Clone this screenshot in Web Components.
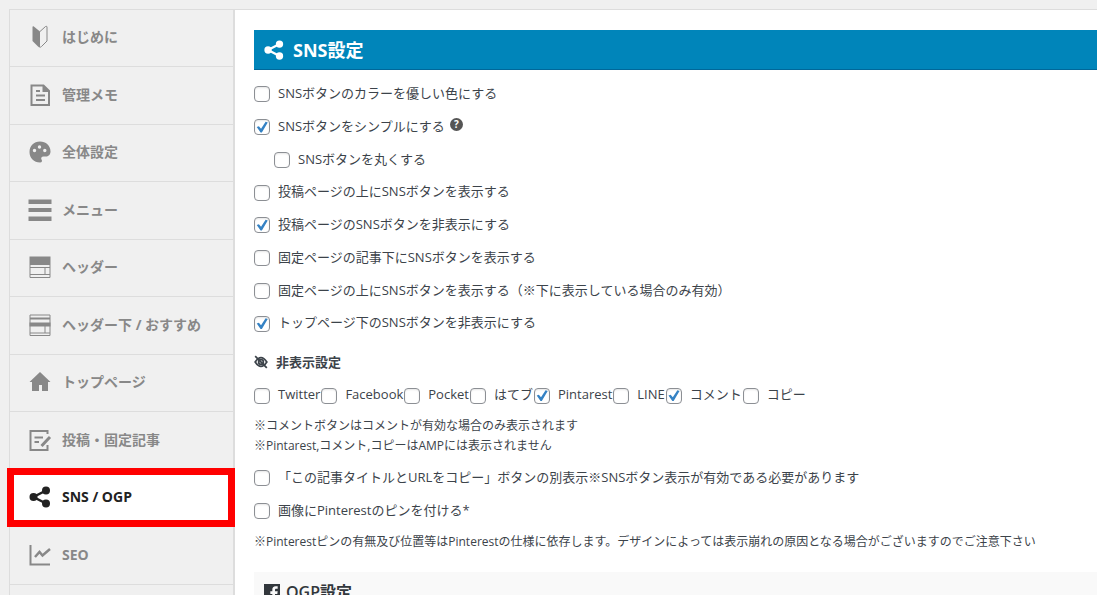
<!DOCTYPE html>
<html lang="ja">
<head>
<meta charset="utf-8">
<meta name="viewport" content="width=device-width, initial-scale=1">
<title>SNS設定</title>
<style>
  body {
    margin: 0;
    height: 100vh;
    overflow: hidden;
    background: #f0f0f0;
    color: #3c434a;
    font: 13px/20px "Open Sans", "Noto Sans CJK JP", sans-serif;
  }
</style>
</head>
<body>
<settings-page>
  <side-nav slot="nav">
    <nav-item icon="beginner">はじめに</nav-item>
    <nav-item icon="memo">管理メモ</nav-item>
    <nav-item icon="palette">全体設定</nav-item>
    <nav-item icon="menu">メニュー</nav-item>
    <nav-item icon="header">ヘッダー</nav-item>
    <nav-item icon="subheader">ヘッダー下 / おすすめ</nav-item>
    <nav-item icon="home">トップページ</nav-item>
    <nav-item icon="post">投稿・固定記事</nav-item>
    <nav-item icon="share" active>SNS / OGP</nav-item>
    <nav-item icon="chart">SEO</nav-item>
  </side-nav>

  <section-title icon="share">SNS設定</section-title>
  <option-list>
    <check-option>SNSボタンのカラーを優しい色にする</check-option>
    <check-option checked>SNSボタンをシンプルにする<help-button slot="after"></help-button></check-option>
    <check-option nested>SNSボタンを丸くする</check-option>
    <check-option>投稿ページの上にSNSボタンを表示する</check-option>
    <check-option checked>投稿ページのSNSボタンを非表示にする</check-option>
    <check-option>固定ページの記事下にSNSボタンを表示する</check-option>
    <check-option>固定ページの上にSNSボタンを表示する（※下に表示している場合のみ有効）</check-option>
    <check-option checked>トップページ下のSNSボタンを非表示にする</check-option>
  </option-list>

  <sub-title icon="hidden">非表示設定</sub-title>
  <option-list inline>
    <check-option>Twitter</check-option>
    <check-option>Facebook</check-option>
    <check-option>Pocket</check-option>
    <check-option>はてブ</check-option>
    <check-option checked>Pintarest</check-option>
    <check-option>LINE</check-option>
    <check-option checked>コメント</check-option>
    <check-option>コピー</check-option>
  </option-list>
  <note-text>※コメントボタンはコメントが有効な場合のみ表示されます<br>※Pintarest,コメント,コピーはAMPには表示されません</note-text>
  <option-list>
    <check-option>「この記事タイトルとURLをコピー」ボタンの別表示※SNSボタン表示が有効である必要があります</check-option>
    <check-option>画像にPinterestのピンを付ける*</check-option>
  </option-list>
  <note-text>※Pinterestピンの有無及び位置等はPinterestの仕様に依存します。デザインによっては表示崩れの原因となる場合がございますのでご注意下さい</note-text>
  <section-title icon="facebook" plain>OGP設定</section-title>
</settings-page>

<script>
const icons = {
  beginner: '<path fill="currentColor" d="M4.5 2Q4.5 1 5.5 1.2L12 6.500V22.500Q11 22.500 9.500 21L4.500 16z"/><path fill="none" stroke="currentColor" d="M12 6.500 17.500 1.500Q19 .8 19 2V16L13.500 21.500Q12.500 22.500 12 22"/>',
  memo: '<path fill="none" stroke="currentColor" stroke-width="2" d="M3.500 2.500H15.500L21 8V22H3.500z"/><path fill="currentColor" d="M14.500 2 21.500 9H14.500zM8 7H12V9H8zM8 11.500H17V13.500H8zM8 16H17V18H8z"/>',
  palette: '<path fill="currentColor" fill-rule="evenodd" d="M12 1.500C5.800 1.500 1.500 6 1.500 12S6 22.500 12 22.500C14 22.500 14.500 21 13.500 19.500C12.700 18 13.500 16.500 15.500 16.500H18C21 16.500 22.500 14 22.500 11.500C22.500 5.500 17.800 1.500 12 1.500zM6.500 8.800A1.700 1.700 0 1 1 6.500 12.200A1.700 1.700 0 1 1 6.500 8.800zM11.500 5.300A1.700 1.700 0 1 1 11.500 8.700A1.700 1.700 0 1 1 11.500 5.300zM16.800 8.800A1.700 1.700 0 1 1 16.800 12.200A1.700 1.700 0 1 1 16.800 8.800z"/>',
  menu: '<path fill="currentColor" d="M.5 1.500H23.500V6H.5zM.5 10H23.500V14H.5zM.5 18.500H23.500V23H.5z"/>',
  header: '<path fill="currentColor" d="M1.500 1.500H22.500V10H1.500z"/><path fill="none" stroke="currentColor" d="M2 10V22.500H22V10M2 12.500H22M2 19.500H22M17 12.500V19.500"/>',
  subheader: '<path fill="currentColor" d="M1.500 9.500H22.500V13.500H1.500z"/><path fill="none" stroke="currentColor" d="M2 2H22V22.500H2zM2 20H22M17 13V20"/><path stroke="currentColor" stroke-width="2" d="M2 5.500H22"/>',
  home: '<path fill="currentColor" d="M12 2 22.500 12H20V21H14V15H11V21H4V12H1.500z"/>',
  post: '<path fill="none" stroke="currentColor" stroke-width="2" d="M19.500 6V3H2.500V22H19.500V17"/><path fill="none" stroke="currentColor" stroke-width="2" d="M6.500 9.500H15M6.500 14H11"/><path stroke="currentColor" stroke-width="3" d="M13.500 18 22 9"/>',
  share: '<path fill="none" stroke="currentColor" stroke-width="2.500" d="M18 5.500 5.500 12 18 18.500"/><circle cx="5.500" cy="12" r="4" fill="currentColor"/><circle cx="18" cy="5.500" r="4" fill="currentColor"/><circle cx="18" cy="18.500" r="4" fill="currentColor"/>',
  chart: '<path fill="none" stroke="currentColor" stroke-width="2" d="M2.500 2V21.500H22"/><path fill="none" stroke="currentColor" stroke-width="2.500" d="M7 14 11.500 9 14.500 12.500 22 6"/>',
  hidden: '<path fill="none" stroke="currentColor" stroke-width="3" d="M2 12Q12-3 22 12Q12 27 2 12z"/><circle cx="12" cy="12" r="4" fill="none" stroke="currentColor" stroke-width="3"/><path stroke="currentColor" stroke-width="3" d="M2 2 22 22"/>',
  facebook: '<path fill="currentColor" fill-rule="evenodd" d="M0 0H24V24H16.500V15H20L20.500 11H16.500V8.800C16.500 7.600 17 7 18.300 7H20.500V3.500H17.500C14 3.500 12.500 5.500 12.500 8.300V11H9.500V15H12.500V24H0z"/>'
};

class UiIcon extends HTMLElement {
  constructor() {
    super();
    this.shadowDOM = this.attachShadow({ mode: 'open' });
  }

  connectedCallback() {
    this.shadowDOM.innerHTML = `
      <style>
        :host {
          display: block;
          flex: none;
          width: var(--icon-size, 24px);
          height: var(--icon-size, 24px);
        }

        svg {
          display: block;
          width: 100%;
          height: 100%;
        }
      </style>
      <svg viewBox="0 0 24 24" aria-hidden="true">${icons[this.getAttribute('name')]}</svg>
    `;
  }
}

class SettingsPage extends HTMLElement {
  constructor() {
    super();
    this.shadowDOM = this.attachShadow({ mode: 'open' });
  }

  connectedCallback() {
    this.shadowDOM.innerHTML = `
      <style>
        :host {
          display: flex;
          padding: 9px 0 0 9px;
        }

        main {
          flex: 1;
          min-width: 0;
          padding: 20px 0 0 19px;
          border-top: 1px solid #ddd;
          background: #fff;
        }
      </style>
      <slot name="nav"></slot>
      <main><slot></slot></main>
    `;
  }
}

class SideNav extends HTMLElement {
  constructor() {
    super();
    this.shadowDOM = this.attachShadow({ mode: 'open' });
  }

  connectedCallback() {
    this.shadowDOM.innerHTML = `
      <style>
        :host {
          display: block;
          flex: none;
          width: 223px;
          border: 1px solid #ddd;
          border-right-width: 2px;
        }

        nav {
          display: grid;
          grid-auto-rows: 57px 58px;
        }
      </style>
      <nav><slot></slot></nav>
    `;
  }
}

class NavItem extends HTMLElement {
  constructor() {
    super();
    this.shadowDOM = this.attachShadow({ mode: 'open' });
  }

  connectedCallback() {
    this.shadowDOM.innerHTML = `
      <style>
        :host {
          display: block;
          position: relative;
          border-bottom: 1px solid #ddd;
        }

        a {
          display: flex;
          align-items: center;
          gap: 10px;
          box-sizing: border-box;
          height: 100%;
          padding: 0 0 2px 18px;
          color: #888;
          font-size: 14px;
          font-weight: 700;
          text-decoration: none;
        }

        :host([active]) a {
          background: #fff;
          color: #222;
        }

        /* frame drawn over the neighbouring rows */
        :host([active])::after {
          content: "";
          position: absolute;
          inset: -2px -2px -1px -3px;
          border: 7px solid #f00;
          pointer-events: none;
        }
      </style>
      <a href="#"><ui-icon name="${this.getAttribute('icon')}"></ui-icon><span><slot></slot></span></a>
    `;
  }
}

class SectionTitle extends HTMLElement {
  constructor() {
    super();
    this.shadowDOM = this.attachShadow({ mode: 'open' });
  }

  connectedCallback() {
    this.shadowDOM.innerHTML = `
      <style>
        :host {
          display: block;
          margin-bottom: 6px;
        }

        :host([plain]) {
          margin: 20px 0 0;
        }

        h2 {
          --icon-size: 22px;
          display: flex;
          align-items: center;
          gap: 8px;
          box-sizing: border-box;
          min-height: 40px;
          margin: 0;
          padding-left: 9px;
          border-bottom: 1px solid #006799;
          background: #0085ba;
          color: #fff;
          font-size: 18px;
          font-weight: 700;
        }

        :host([plain]) h2 {
          --icon-size: 16px;
          gap: 6px;
          padding-left: 10px;
          border-color: #eee;
          background: #f9f9f9;
          color: #32373c;
          font-size: 16px;
          font-weight: 600;
        }
      </style>
      <h2><ui-icon name="${this.getAttribute('icon')}"></ui-icon><span><slot></slot></span></h2>
    `;
  }
}

class SubTitle extends HTMLElement {
  constructor() {
    super();
    this.shadowDOM = this.attachShadow({ mode: 'open' });
  }

  connectedCallback() {
    this.shadowDOM.innerHTML = `
      <style>
        :host {
          --icon-size: 14px;
          display: block;
          margin: 14px 0 6px;
        }

        h3 {
          display: flex;
          align-items: center;
          gap: 8px;
          margin: 0;
          font-size: 13px;
          font-weight: 700;
        }
      </style>
      <h3><ui-icon name="${this.getAttribute('icon')}"></ui-icon><span><slot></slot></span></h3>
    `;
  }
}

class OptionList extends HTMLElement {
  constructor() {
    super();
    this.shadowDOM = this.attachShadow({ mode: 'open' });
  }

  connectedCallback() {
    this.shadowDOM.innerHTML = `
      <style>
        :host {
          display: grid;
          grid-auto-rows: 33px 33px 33px 32px;
        }

        :host([inline]) {
          display: flex;
          flex-wrap: wrap;
          column-gap: 1px;
        }
      </style>
      <slot></slot>
    `;
  }
}

class CheckOption extends HTMLElement {
  constructor() {
    super();
    this.shadowDOM = this.attachShadow({ mode: 'open' });
  }

  connectedCallback() {
    this.shadowDOM.innerHTML = `
      <style>
        :host {
          display: flex;
          align-items: center;
          gap: 5px;
          min-height: 32px;
        }

        :host([nested]) {
          padding-left: 20px;
        }

        label {
          display: flex;
          align-items: center;
          gap: 8px;
        }

        input {
          appearance: none;
          flex: none;
          display: grid;
          place-items: center;
          width: 16px;
          height: 16px;
          margin: 3px 0 0;
          border: 1px solid #8c8f94;
          border-radius: 4px;
          background: #fff;
          box-shadow: inset 0 1px 2px rgba(0, 0, 0, .1);
        }

        input:checked::before {
          content: "";
          width: 12px;
          height: 12px;
          background: #3582c4;
          clip-path: polygon(6% 50%, 24% 43%, 42% 65%, 80% 6%, 98% 12%, 49% 96%, 38% 96%);
        }
      </style>
      <label><input type="checkbox" ${this.hasAttribute('checked') ? 'checked' : ''}><span><slot></slot></span></label>
      <slot name="after"></slot>
    `;
  }
}

class HelpButton extends HTMLElement {
  constructor() {
    super();
    this.shadowDOM = this.attachShadow({ mode: 'open' });
  }

  connectedCallback() {
    this.shadowDOM.innerHTML = `
      <style>
        :host {
          display: block;
        }

        button {
          display: block;
          width: 13px;
          height: 13px;
          margin: 0 0 2px;
          padding: 0;
          border: 0;
          border-radius: 50%;
          background: #555;
          color: #fff;
          font: 700 10px/13px "Open Sans", sans-serif;
        }
      </style>
      <button type="button">?</button>
    `;
  }
}

class NoteText extends HTMLElement {
  constructor() {
    super();
    this.shadowDOM = this.attachShadow({ mode: 'open' });
  }

  connectedCallback() {
    this.shadowDOM.innerHTML = `
      <style>
        :host {
          display: block;
          margin: 6px 0 4px;
        }

        p {
          margin: 0;
          font-size: 12px;
          line-height: 20px;
        }
      </style>
      <p><slot></slot></p>
    `;
  }
}

customElements.define('ui-icon', UiIcon);
customElements.define('settings-page', SettingsPage);
customElements.define('side-nav', SideNav);
customElements.define('nav-item', NavItem);
customElements.define('section-title', SectionTitle);
customElements.define('sub-title', SubTitle);
customElements.define('option-list', OptionList);
customElements.define('check-option', CheckOption);
customElements.define('help-button', HelpButton);
customElements.define('note-text', NoteText);
</script>
</body>
</html>
